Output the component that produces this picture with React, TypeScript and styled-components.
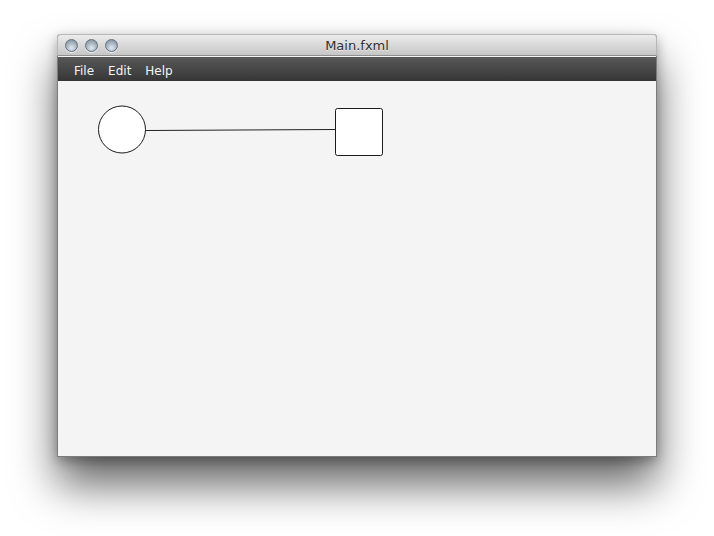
import React from "react";
import styled, { createGlobalStyle } from "styled-components";

const Global = createGlobalStyle`
  html, body { margin: 0; padding: 0; background: #ffffff; }
  body { font-family: "DejaVu Sans", "Liberation Sans", sans-serif; }
`;

const Page = styled.div`
  width: 714px;
  height: 536px;
  padding: 34px 0 0 57px;
  box-sizing: border-box;
  overflow: hidden;
`;

const Window = styled.div`
  width: 600px;
  height: 423px;
  display: flex;
  flex-direction: column;
  box-sizing: border-box;
  border: 1px solid #7c7c7c;
  border-top: none;
  border-radius: 4px 4px 0 0;
  box-shadow: 0 28px 44px rgba(0, 0, 0, 0.6), 0 4px 12px rgba(0, 0, 0, 0.3);
  background: #f4f4f4;
`;

const TitleBar = styled.div`
  position: relative;
  height: 20px;
  flex: none;
  display: flex;
  align-items: center;
  padding-left: 7px;
  gap: 7px;
  margin: 0 -1px;
  border: 1px solid #b8b8b8;
  border-bottom: 1px solid #8e8e8e;
  border-radius: 4px 4px 0 0;
  background: linear-gradient(#ececec, #d9d9d9 50%, #c6c6c6);
`;

const Light = styled.span`
  width: 13px;
  height: 13px;
  border-radius: 50%;
  box-sizing: border-box;
  border: 1px solid #64717e;
  background: radial-gradient(circle at 50% 72%, #e2eaf1 0%, #a9b6c2 50%, #7a8895 100%);
  box-shadow: 0 1px 0 rgba(255, 255, 255, 0.7);
`;

const Title = styled.div`
  position: absolute;
  left: 0;
  right: 0;
  top: 0;
  bottom: 0;
  display: flex;
  align-items: center;
  justify-content: center;
  font-size: 13px;
  color: #2e2e2e;
  text-shadow: 0 1px 0 rgba(255, 255, 255, 0.6);
  pointer-events: none;
`;

const MenuBar = styled.div`
  flex: none;
  display: flex;
  align-items: center;
  padding: 3px 0 0 9px;
  box-sizing: border-box;
  border-top: 1px solid #f2f2f2;
  height: 25px;
  background: linear-gradient(#575757, #474747 50%, #363636);
`;

const MenuItem = styled.span`
  padding: 0 7px;
  font-size: 12px;
  color: #f4f4f4;
  line-height: 20px;
`;

const Canvas = styled.div`
  flex: 1;
  position: relative;
  background: #f4f4f4;
`;

const Diagram = styled.svg`
  display: block;
`;

export default function App() {
  return (
    <>
      <Global />
      <Page>
        <Window>
          <TitleBar>
            <Light />
            <Light />
            <Light />
            <Title>Main.fxml</Title>
          </TitleBar>
          <MenuBar>
            <MenuItem>File</MenuItem>
            <MenuItem>Edit</MenuItem>
            <MenuItem>Help</MenuItem>
          </MenuBar>
          <Canvas>
            <Diagram width="598" height="375" viewBox="0 0 598 375">
              <line x1="87.5" y1="49.5" x2="277" y2="48.5" stroke="#222" strokeWidth="1" />
              <circle cx="64" cy="48.5" r="23.5" fill="#ffffff" stroke="#1c1c1c" strokeWidth="1" />
              <rect x="277.5" y="27.5" width="47" height="47" rx="2" fill="#ffffff" stroke="#1c1c1c" strokeWidth="1" />
            </Diagram>
          </Canvas>
        </Window>
      </Page>
    </>
  );
}
